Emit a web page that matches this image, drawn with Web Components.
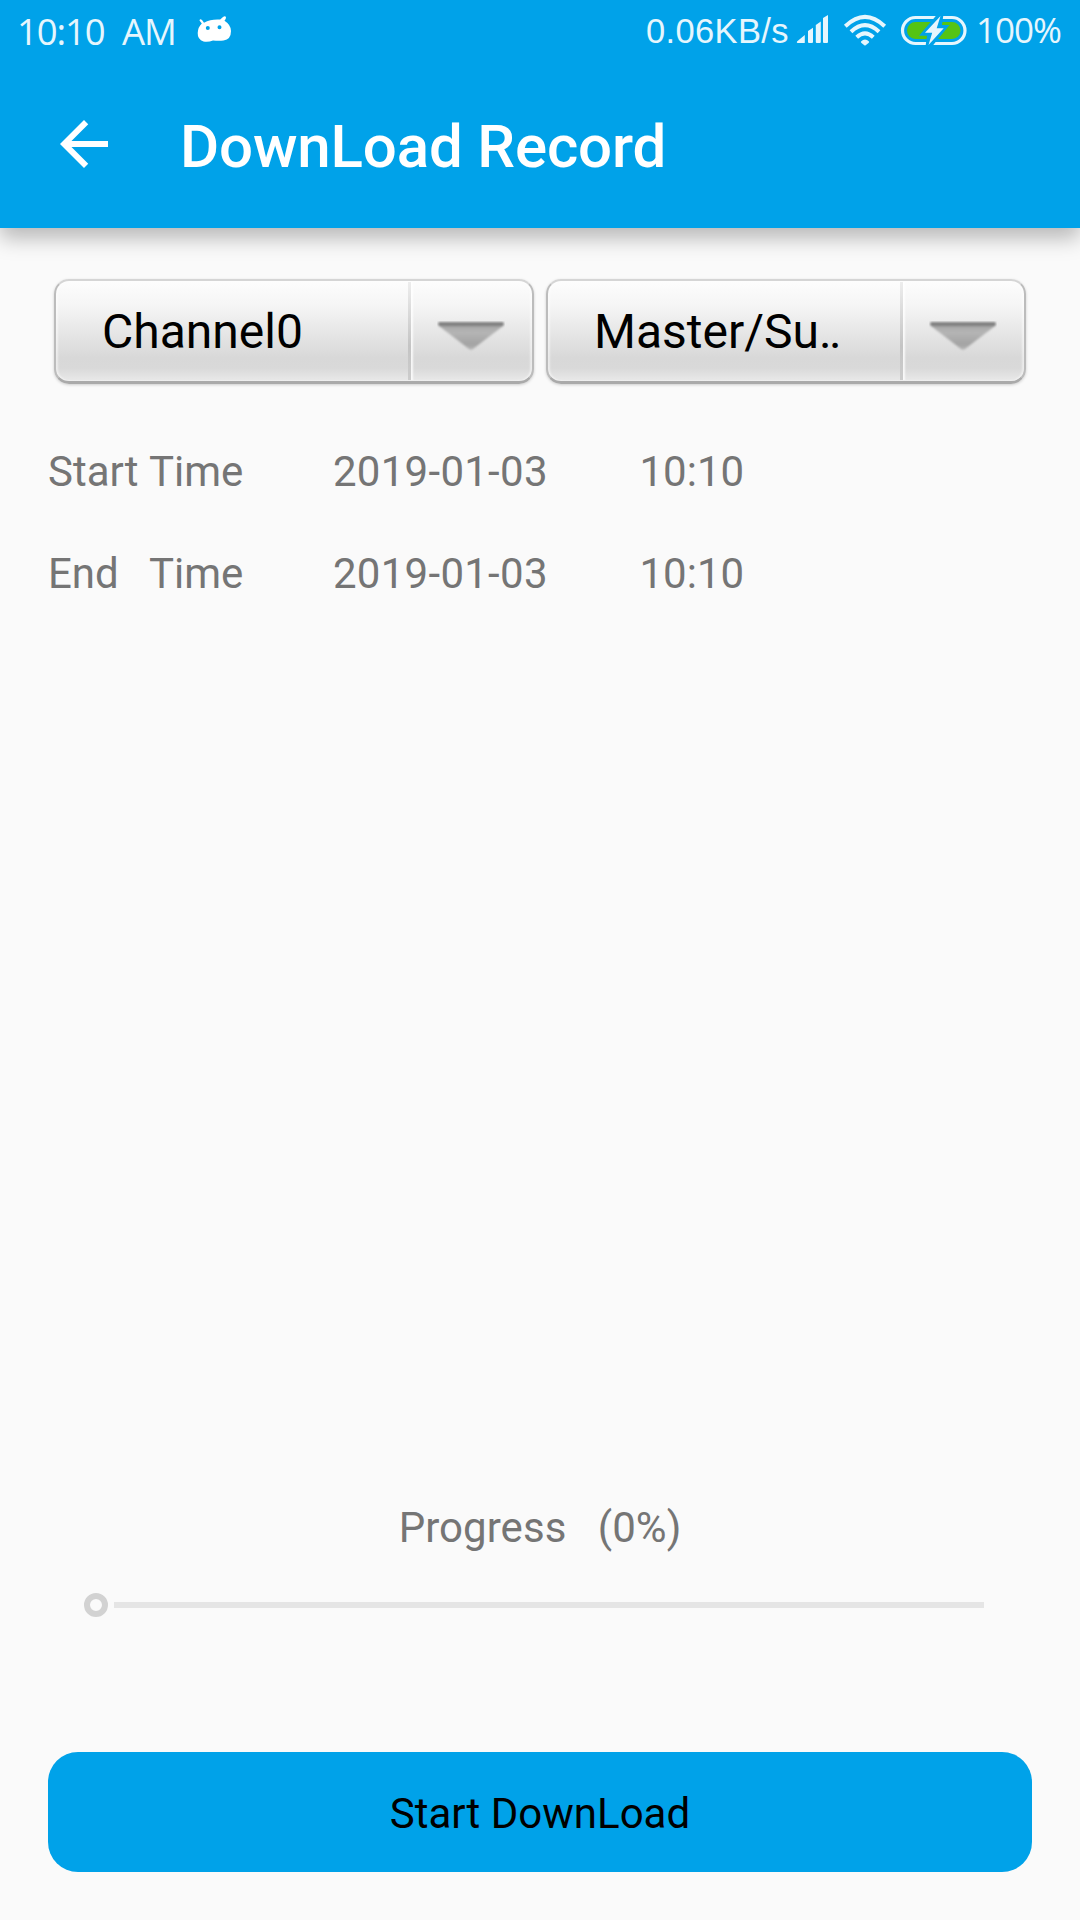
<!DOCTYPE html>
<html lang="en">
<head>
<meta charset="utf-8">
<title>DownLoad Record</title>
<style>
html, body { margin: 0; height: 100%; background: #fafafa; }
body { font-family: Roboto, "Liberation Sans", sans-serif; overflow: hidden; }
</style>
</head>
<body>
<record-screen></record-screen>
<script>
const define = (name, html) => {
  const t = document.createElement('template');
  t.innerHTML = html;
  customElements.define(name, class extends HTMLElement {
    constructor() {
      super();
      this.attachShadow({ mode: 'open' }).appendChild(t.content.cloneNode(true));
    }
  });
};

define('status-bar', `
<style>
:host { display: flex; height: 60px; box-sizing: border-box; align-items: flex-start; color: #e6f6fd; font: 400 36px/50px "Open Sans", "Noto Sans", sans-serif; white-space: pre; }
.time { margin: 6px 0 0 17px; width: 179px; font-size: 36.5px; word-spacing: 9px; letter-spacing: -1.1px; }
.rate { margin: 6px 0 0 auto; width: 149px; font: 400 34.5px/50px "Liberation Sans", sans-serif; letter-spacing: .35px; }
.pct { margin: 5px 0 0 5px; width: 104px; font-size: 35px; letter-spacing: -1px; }
svg { display: block; flex: none; }
</style>
<span class="time">10:10 AM</span>
<svg width="36" height="60" viewBox="196 0 36 60"><path fill="#fff" fill-rule="evenodd" d="M199.5 20.5Q200 18 202.2 20.2L204 22.7Q211 18.8 220.2 19.5L223 17Q225.5 15.200 226 17.500Q226 19 224.500 20.800Q231 25 231 31Q231 39.500 223.500 40.500Q219 41 213 40.500Q208 42.500 203.500 41.500Q197.500 39.500 197.700 33Q198 27 201.800 23.500ZM205.800 28a2 2 0 1 0 4 0a2 2 0 1 0-4 0M217.500 27.300a2 2 0 1 0 4 0a2 2 0 1 0-4 0"/></svg>
<span class="rate">0.06KB/s</span>
<svg width="36" height="60" viewBox="795 0 36 60" fill="#e6f6fd"><path d="M797 41.500L804.800 35V42.500Q804.800 43 804.300 43H798Q796.200 43 797 41.500ZM808 31L813 27.700V42q0 1-1 1h-3q-1 0-1-1ZM815.800 25L820.800 21.500V42q0 1-1 1h-3q-1 0-1-1ZM823 18L828 15V42q0 1-1 1h-3q-1 0-1-1Z"/></svg>
<svg width="62" height="60" viewBox="831 0 62 60"><g fill="none" stroke="#e6f6fd" stroke-width="4"><path d="M845.300 26.200Q865 7.500 884.700 26.200M851 31.800Q865 18.500 879 31.800M856.700 37.300Q865 29.500 873.300 37.300"/></g><path fill="#e6f6fd" d="M861 41.500Q865 37.500 869 41.500Q869.500 42 868.500 43L865.700 45.200Q865 45.600 864.300 45.200L861.500 43Q860.500 42 861 41.500Z"/></svg>
<svg width="78" height="60" viewBox="893 0 78 60"><rect x="902.500" y="17.500" width="62.500" height="26" rx="13" fill="none" stroke="#e6f6fd" stroke-width="3.200"/><rect x="907" y="22" width="53.500" height="17" rx="8.500" fill="#55c414"/><path d="M937.500 14L919 35.800H927L925.500 46.500H932L949.500 25H942L943.500 14Z" fill="#00a2e9"/><path d="M940.500 16L925 32.700H932.200L928.500 45L943.700 28.300H936.700Z" fill="#e6f6fd"/></svg>
<span class="pct">100%</span>`);

define('app-toolbar', `
<style>
:host { display: flex; height: 168px; align-items: center; box-sizing: border-box; padding-left: 60px; color: #fff; }
svg { display: block; margin-right: 72px; }
h1 { margin: 0; padding-top: 5px; font-size: 60px; line-height: 70px; font-weight: 500; letter-spacing: -.15px; }
</style>
<svg width="48" height="48" viewBox="4 4 16 16" fill="#fff"><path d="M20 11H7.830l5.590-5.590L12 4l-8 8 8 8 1.410-1.410L7.830 13H20v-2z"/></svg>
<h1><slot></slot></h1>`);

define('drop-down', `
<style>
:host { display: flex; box-sizing: border-box; width: 480px; height: 105px; border: 2px solid; border-color: #d5d5d5 #bcbcbc #aaa; border-bottom-width: 3px; border-radius: 15px; background: linear-gradient(#fdfdfd 0, #f5f5f5 25%, #e6e6e6 52%, #d8d8d8 77%, #d9d9d9 87%, #e9e9e9 100%); box-shadow: 0 1px 3px rgba(0,0,0,.18), inset 2px 0 2px rgba(255,255,255,.5), inset -2px 0 2px rgba(255,255,255,.5); color: #000; }
.label { flex: 1; padding-left: 46px; font-size: 48px; line-height: 101px; white-space: pre; }
.arrow { width: 124px; box-sizing: border-box; margin: 1px 0; border-left: 3px solid; border-image: linear-gradient(#eee, #c4c4c4 65%, #ccc) 1; box-shadow: inset 3px 0 2px -1px rgba(255,255,255,.8); }
svg { display: block; margin: 39px 0 0 26px; }
::slotted(span) { letter-spacing: -2.6px; }
</style>
<span class="label"><slot></slot></span>
<span class="arrow"><svg width="68" height="31"><defs><linearGradient id="g" x1="0" y1="0" x2="0" y2="1"><stop offset="0" stop-color="#858585"/><stop offset=".11" stop-color="#7c7c7c"/><stop offset=".18" stop-color="#aaa"/><stop offset=".38" stop-color="#b5b5b5"/><stop offset=".8" stop-color="#a3a3a3"/><stop offset="1" stop-color="#b5b5b5"/></linearGradient><filter id="b"><feGaussianBlur stdDeviation=".9"/></filter></defs><path filter="url(#b)" fill="url(#g)" d="M2 1H66Q68 3 66 5L36 28Q34 29.500 32 28L2 5Q0 3 2 1Z"/></svg></span>`);

define('time-row', `
<style>
:host { display: flex; height: 102px; line-height: 102px; font-size: 42px; color: #757575; white-space: pre; }
.name { width: 101px; }
.t { width: 184px; }
.date { width: 306.5px; letter-spacing: .27px; }
</style>
<span class="name"><slot name="name"></slot></span><span class="t">Time</span><span class="date"><slot name="date"></slot></span><slot></slot>`);

define('seek-bar', `
<style>
:host { display: flex; align-items: center; gap: 6px; padding: 0 96px 0 84px; height: 24px; }
.thumb { box-sizing: border-box; width: 24px; height: 24px; border: 6px solid #d2d2d2; border-radius: 50%; }
.track { flex: 1; height: 6px; background: #e5e5e5; }
</style>
<span class="thumb"></span><span class="track"></span>`);

define('action-button', `
<style>
:host { display: block; height: 120px; margin: 0 48px; border-radius: 30px; background: #00a2e9; color: #000; text-align: center; font-size: 42px; line-height: 123px; }
</style>
<slot></slot>`);

define('record-screen', `
<style>
:host { display: flex; flex-direction: column; width: 1080px; height: 1920px; background: #fafafa; }
header { flex: none; background: #00a2e9; box-shadow: 0 10px 20px rgba(0,0,0,.27); }
.selects { display: flex; gap: 12px; margin: 51px 0 0 54px; }
.times { margin: 37px 0 0 48px; }
.progress { margin-top: auto; text-align: center; font-size: 42px; line-height: 50px; color: #757575; white-space: pre; letter-spacing: .05px; }
seek-bar { margin: 40px 0 135px; }
action-button { margin-bottom: 48px; }
</style>
<header><status-bar></status-bar><app-toolbar>DownLoad Record</app-toolbar></header>
<div class="selects"><drop-down>Channel0</drop-down><drop-down>Master/Su<span>..</span></drop-down></div>
<div class="times">
<time-row><span slot="name">Start</span><span slot="date">2019-01-03</span>10:10</time-row>
<time-row><span slot="name">End</span><span slot="date">2019-01-03</span>10:10</time-row>
</div>
<div class="progress">Progress   (0%)</div>
<seek-bar></seek-bar>
<action-button>Start DownLoad</action-button>`);
</script>
</body>
</html>
